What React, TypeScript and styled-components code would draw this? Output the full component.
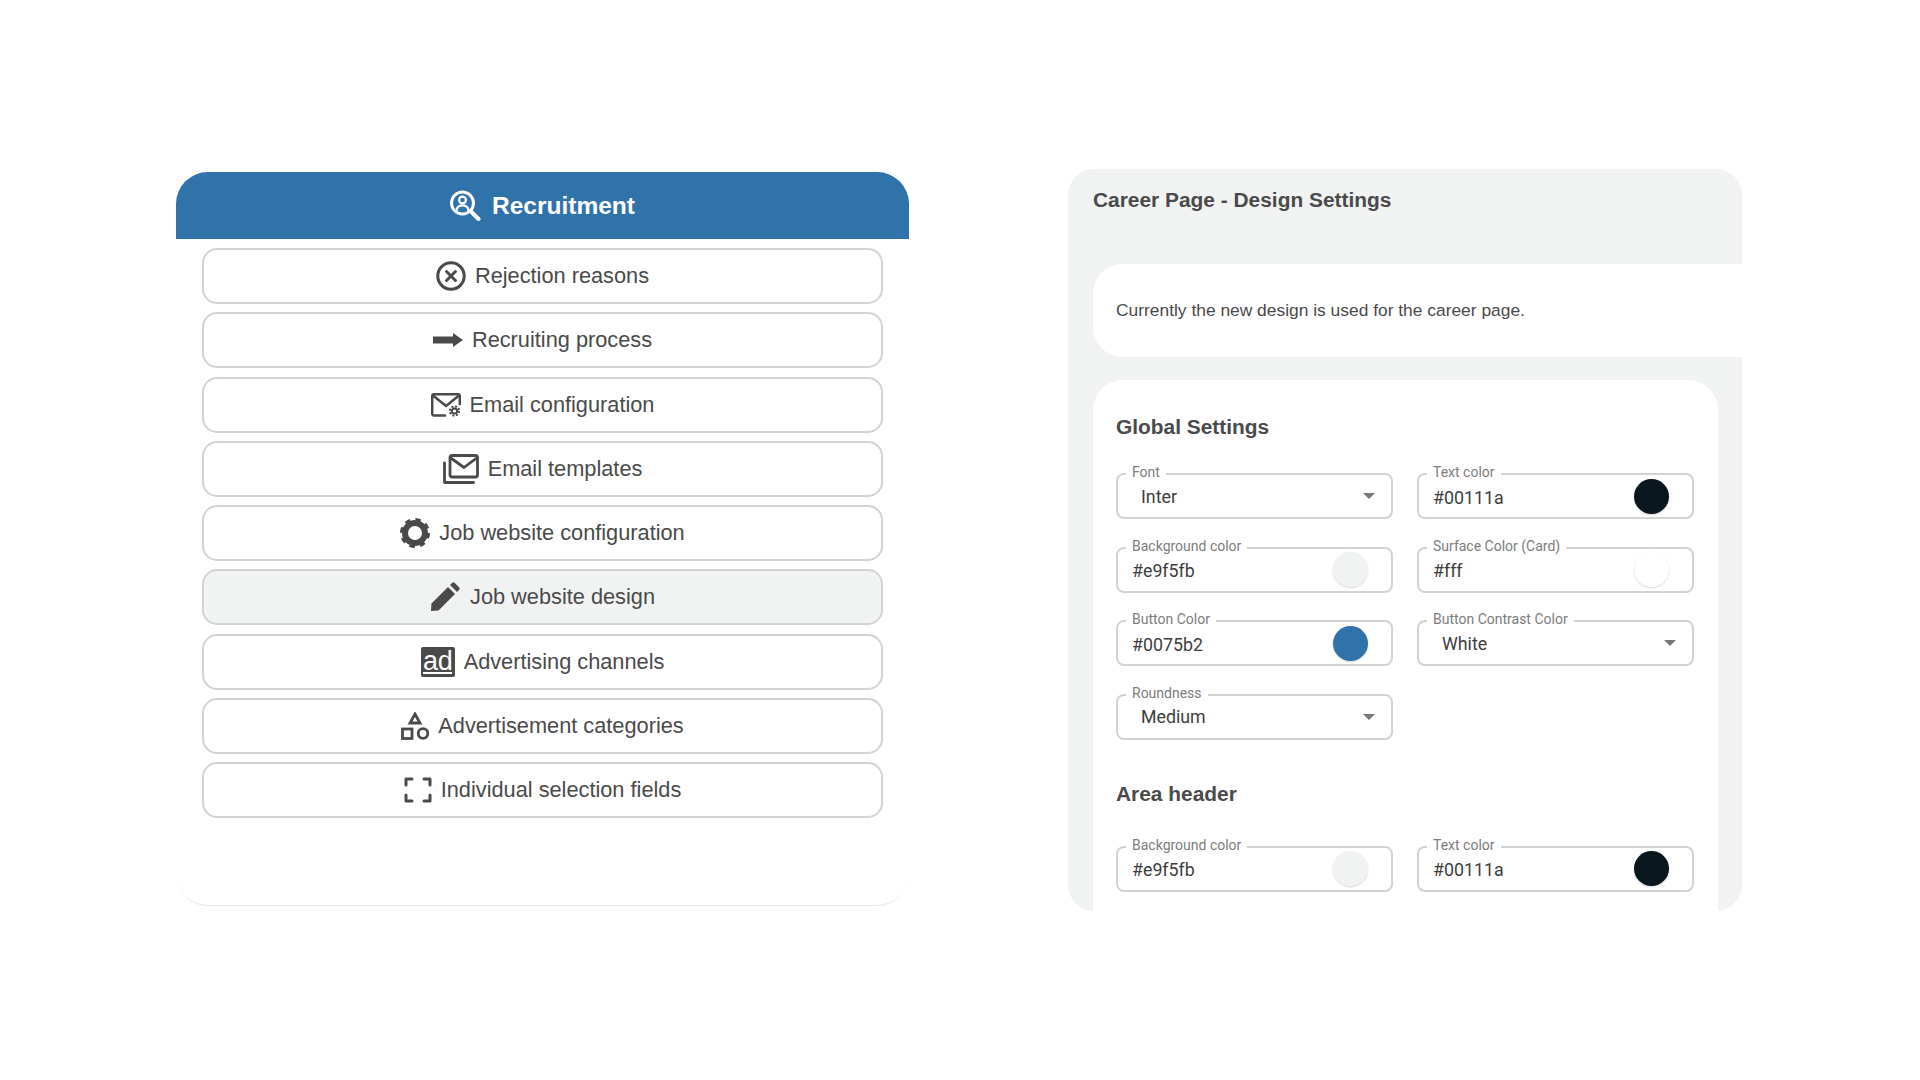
import React from "react";
import styled, { createGlobalStyle } from "styled-components";

const GlobalStyle = createGlobalStyle`
  html, body {
    margin: 0;
    padding: 0;
    background: #fff;
  }
  * {
    box-sizing: border-box;
  }
`;

const Page = styled.div`
  width: 1920px;
  height: 1080px;
  padding: 169px 0 0 176px;
  display: flex;
  align-items: flex-start;
  gap: 159px;
  font-family: "Liberation Sans", Arial, sans-serif;
  color: #4a4a4a;
  overflow: hidden;
`;

const MenuCard = styled.section`
  width: 733px;
  height: 733px;
  margin-top: 3px;
  background: #fff;
  border-radius: 32px;
  box-shadow: 0 2px 1px -1px rgba(40, 60, 70, 0.13);
  overflow: hidden;
`;

const MenuHeader = styled.header`
  height: 67px;
  background: #3072aa;
  color: #fff;
  display: flex;
  align-items: center;
  justify-content: center;
  gap: 11px;
  font-size: 24.5px;
  font-weight: 700;
`;

const MenuList = styled.nav`
  display: flex;
  flex-direction: column;
  gap: 8.25px;
  padding: 9px 26px 0 26px;
`;

const MenuButton = styled.div<{ $active?: boolean }>`
  height: 56px;
  display: flex;
  align-items: center;
  justify-content: center;
  gap: ${(p) => (p.$active ? "10px" : "9px")};
  font-size: 21.75px;
  border: 2.5px solid #d2d4d4;
  border-radius: 15px;
  background: ${(p) => (p.$active ? "#f1f3f3" : "#fff")};
`;

const AdBadge = styled.span`
  width: 34px;
  height: 30px;
  flex: none;
  display: flex;
  align-items: flex-end;
  justify-content: center;
  padding-bottom: 3px;
  background: #4a4a4a;
  border-radius: 2px;
`;

const AdText = styled.span`
  font-size: 27px;
  line-height: 21px;
  letter-spacing: -0.5px;
  color: #fff;
  border-bottom: 2px solid #fff;
`;

const SettingsCard = styled.section`
  width: 674px;
  height: 742px;
  background: #f1f3f3;
  border-radius: 26px;
  padding: 18px 0 0 25px;
  overflow: hidden;
`;

const PageTitle = styled.h1`
  margin: 0 0 51px;
  font-size: 20.9px;
  line-height: 26px;
  font-weight: 700;
`;

const Notice = styled.div`
  height: 93px;
  margin-bottom: 23px;
  padding-left: 23px;
  display: flex;
  align-items: center;
  background: #fff;
  border-radius: 30px 0 0 30px;
  font-size: 17.4px;
`;

const SettingsPanel = styled.div`
  width: 625px;
  height: 560px;
  padding: 35px 24px 0 23px;
  background: #fff;
  border-radius: 30px 30px 0 0;
`;

const SectionTitle = styled.h2<{ $spaced?: boolean }>`
  margin: ${(p) => (p.$spaced ? "42px 0 40px" : "0 0 34px")};
  font-size: 20.9px;
  line-height: 24px;
  font-weight: 700;
`;

const FieldGrid = styled.div`
  display: grid;
  grid-template-columns: 277px 277px;
  column-gap: 24px;
  row-gap: 27.5px;
`;

const Field = styled.div`
  position: relative;
  height: 46px;
  padding: 0 14px;
  display: flex;
  align-items: center;
  justify-content: space-between;
  border: 2px solid #d2d4d4;
  border-radius: 8px;
  font-family: Roboto, Arial, sans-serif;
`;

const FieldLabel = styled.label`
  position: absolute;
  top: -11px;
  left: 8px;
  padding: 0 6px;
  background: #fff;
  font-size: 14px;
  line-height: 16px;
  color: #7c7c7c;
  white-space: nowrap;
`;

const InputValue = styled.span`
  font-size: 17.8px;
  color: #3d3d3d;
  padding-top: 2px;
`;

const SelectValue = styled(InputValue)`
  padding: 0 0 0 9px;
`;

const Swatch = styled.span<{ $color: string }>`
  width: 35px;
  height: 35px;
  margin-right: 9px;
  border-radius: 50%;
  background: ${(p) => p.$color};
  box-shadow: 0 1px 2px rgba(0, 0, 0, 0.16);
`;

const Caret = styled.span`
  width: 0;
  height: 0;
  margin-right: 2px;
  border-left: 6px solid transparent;
  border-right: 6px solid transparent;
  border-top: 6px solid #777;
`;

const Outline = styled.svg.attrs({ fill: "none", stroke: "currentColor" })`
  flex: none;
  stroke-linecap: round;
  stroke-linejoin: round;
`;

const Solid = styled.svg.attrs({ fill: "currentColor" })`
  flex: none;
`;

const RecruitIcon = () => (
  <Outline width="31" height="31" viewBox="0 0 31 31" strokeWidth="3">
    <circle cx="12.5" cy="13" r="11" />
    <circle cx="12.5" cy="10" r="3.4" strokeWidth="2.2" />
    <path d="M6.5 20.5c.4-3.6 3-5.2 6-5.2s5.6 1.6 6 5.2" strokeWidth="2.2" />
    <path d="M21 21.5l7.5 7.5" strokeWidth="4" />
  </Outline>
);

const RejectIcon = () => (
  <Outline width="30" height="30" viewBox="0 0 30 30" strokeWidth="3">
    <circle cx="15" cy="15" r="13.2" />
    <path d="M10.5 10.5l9 9M19.5 10.5l-9 9" />
  </Outline>
);

const ArrowIcon = () => (
  <Solid width="30" height="14" viewBox="0 0 30 14">
    <path d="M0 3.5h20V0l10 7-10 7v-3.5H0z" />
  </Solid>
);

const MailGearIcon = () => (
  <Outline width="30" height="24" viewBox="0 0 30 24" strokeWidth="2.5">
    <path d="M14 22.5H3a1.8 1.8 0 0 1-1.8-1.8V3A1.8 1.8 0 0 1 3 1.2h24A1.8 1.8 0 0 1 28.8 3v8" />
    <path d="M2 2.5l13 10.5 13-10.5" />
    <circle cx="23.5" cy="18" r="2.6" strokeWidth="2" />
    <circle cx="23.5" cy="18" r="4.6" strokeWidth="2" strokeDasharray="2 1.6" strokeLinecap="butt" />
  </Outline>
);

const MailStackIcon = () => (
  <Outline width="36" height="30" viewBox="0 0 36 30" strokeWidth="2.8">
    <path d="M1.5 9v19.5h29" />
    <rect x="7" y="1.5" width="27.5" height="21.5" rx="2" />
    <path d="M8.5 4.5L21 13.5 33 4.5" />
  </Outline>
);

const GearIcon = () => (
  <Outline width="30" height="30" viewBox="0 0 30 30">
    <circle cx="15" cy="15" r="10" strokeWidth="6" />
    <circle cx="15" cy="15" r="13" strokeWidth="4" strokeDasharray="5.2 5.01" strokeLinecap="butt" />
  </Outline>
);

const PencilIcon = () => (
  <Solid width="30" height="30" viewBox="0 0 30 30">
    <path d="M1 29l.5-7.500L18 5l7 7L8.500 28.500z" />
    <path d="M20 3l2-2a2 2 0 0 1 2.800 0L29 5.200a2 2 0 0 1 0 2.800l-2 2z" />
  </Solid>
);

const ShapesIcon = () => (
  <Outline width="28" height="28" viewBox="0 0 28 28" strokeWidth="2.8">
    <path d="M14 2l5 9H9z" strokeLinejoin="miter" />
    <rect x="1.500" y="17" width="9.500" height="9.500" strokeLinejoin="miter" />
    <circle cx="22" cy="21.500" r="4.800" />
  </Outline>
);

const FocusIcon = () => (
  <Outline width="28" height="26" viewBox="0 0 28 26" strokeWidth="3" strokeLinecap="butt">
    <path d="M2 8V2h6M20 2h6v6M26 18v6h-6M8 24H2v-6" />
  </Outline>
);

const menuItems = [
  { label: "Rejection reasons", icon: <RejectIcon /> },
  { label: "Recruiting process", icon: <ArrowIcon /> },
  { label: "Email configuration", icon: <MailGearIcon /> },
  { label: "Email templates", icon: <MailStackIcon /> },
  { label: "Job website configuration", icon: <GearIcon /> },
  { label: "Job website design", icon: <PencilIcon />, active: true },
  { label: "Advertising channels", icon: <AdBadge><AdText>ad</AdText></AdBadge> },
  { label: "Advertisement categories", icon: <ShapesIcon /> },
  { label: "Individual selection fields", icon: <FocusIcon /> },
];

const ColorField = ({ label, value, color }: { label: string; value: string; color: string }) => (
  <Field>
    <FieldLabel>{label}</FieldLabel>
    <InputValue>{value}</InputValue>
    <Swatch $color={color} />
  </Field>
);

const SelectField = ({ label, value }: { label: string; value: string }) => (
  <Field>
    <FieldLabel>{label}</FieldLabel>
    <SelectValue>{value}</SelectValue>
    <Caret />
  </Field>
);

export default function App() {
  return (
    <Page>
      <GlobalStyle />
      <MenuCard>
        <MenuHeader>
          <RecruitIcon />
          Recruitment
        </MenuHeader>
        <MenuList>
          {menuItems.map((item) => (
            <MenuButton key={item.label} $active={item.active}>
              {item.icon}
              {item.label}
            </MenuButton>
          ))}
        </MenuList>
      </MenuCard>

      <SettingsCard>
        <PageTitle>Career Page - Design Settings</PageTitle>
        <Notice>Currently the new design is used for the career page.</Notice>
        <SettingsPanel>
          <SectionTitle>Global Settings</SectionTitle>
          <FieldGrid>
            <SelectField label="Font" value="Inter" />
            <ColorField label="Text color" value="#00111a" color="#0a171e" />
            <ColorField label="Background color" value="#e9f5fb" color="#f1f3f3" />
            <ColorField label="Surface Color (Card)" value="#fff" color="#ffffff" />
            <ColorField label="Button Color" value="#0075b2" color="#3072aa" />
            <SelectField label="Button Contrast Color" value="White" />
            <SelectField label="Roundness" value="Medium" />
          </FieldGrid>
          <SectionTitle $spaced>Area header</SectionTitle>
          <FieldGrid>
            <ColorField label="Background color" value="#e9f5fb" color="#f1f3f3" />
            <ColorField label="Text color" value="#00111a" color="#0a171e" />
          </FieldGrid>
        </SettingsPanel>
      </SettingsCard>
    </Page>
  );
}
